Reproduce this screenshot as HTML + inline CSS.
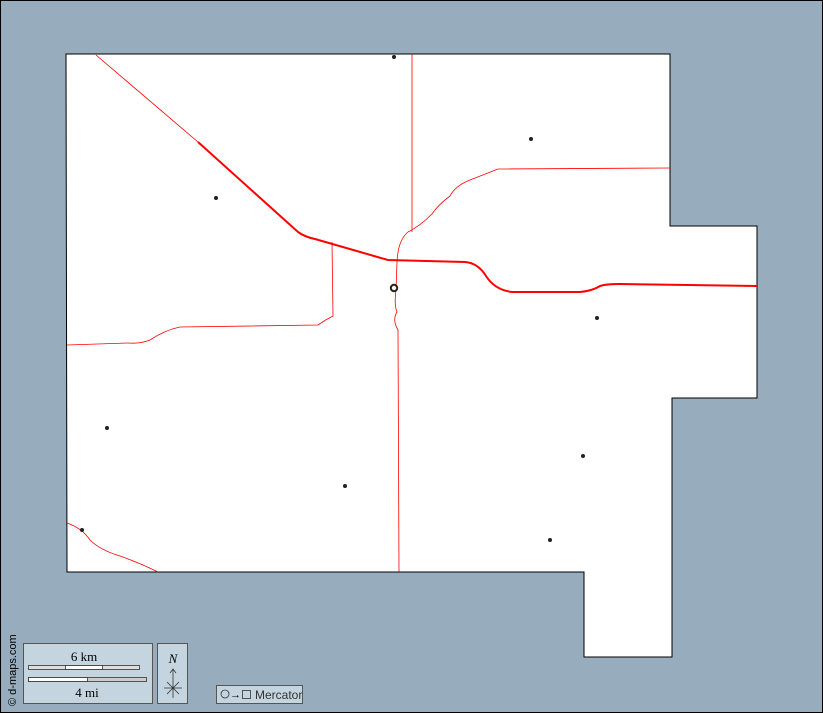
<!DOCTYPE html>
<html><head><style>body{margin:0}svg{display:block}</style></head><body>
<svg width="823" height="713" xmlns="http://www.w3.org/2000/svg">
<rect x="0.5" y="0.5" width="822" height="712" fill="#97adbd" stroke="#000"/>
<polygon points="66,54 670,54 670,226 757,226 757,398 672,398 672,657 584,657 584,572 67,572" fill="#fff" stroke="#000" stroke-width="1"/>
<g fill="none" stroke="#f00">
<path d="M96,55 L198,142" stroke-width="0.8"/>
<path d="M198,142 L298,232 Q305,237 315,239 L388,260 L465,262 Q478,263 486,276 Q495,290 512,292 L580,292 Q592,291 600,286 Q606,284 620,284 L757,286" stroke-width="2"/>
<path d="M412,54 L412,232" stroke-width="0.8"/>
<path d="M670,168 L498,169 L470,180 Q455,186 450,196 Q438,205 432,214 Q420,226 408,232 Q398,240 397,262 L396,290 Q394,305 397,312 Q392,320 398,330 L399,572" stroke-width="0.8"/>
<path d="M332,242 L333,316 Q325,320 318,325 L180,327 Q165,330 150,340 Q140,344 128,343 L67,345" stroke-width="0.8"/>
<path d="M67,523 Q82,528 90,540 Q100,550 120,556 Q140,563 158,572" stroke-width="0.8"/>
</g>
<g fill="#222">
<circle cx="394" cy="57" r="2"/><circle cx="531" cy="139" r="2"/><circle cx="216" cy="198" r="2"/>
<circle cx="597" cy="318" r="2"/><circle cx="107" cy="428" r="2"/><circle cx="583" cy="456" r="2"/>
<circle cx="345" cy="486" r="2"/><circle cx="82" cy="530" r="2"/><circle cx="550" cy="540" r="2"/>
</g>
<circle cx="394" cy="288" r="3.2" fill="#fff" stroke="#222" stroke-width="2"/>
<text transform="translate(16,706) rotate(-90)" font-family="Liberation Sans" font-size="11" fill="#000">© d-maps.com</text>
<rect x="23.5" y="643.5" width="129" height="60" fill="#c5d5e0" stroke="#555"/>
<text x="84" y="661" text-anchor="middle" font-family="Liberation Serif" font-size="13">6 km</text>
<rect x="28.5" y="665.5" width="111" height="4" fill="#ddd" stroke="#333" stroke-width="0.8"/>
<rect x="65.5" y="665.5" width="37" height="4" fill="#fff" stroke="#333" stroke-width="0.8"/>
<rect x="28.5" y="677.5" width="118" height="4" fill="#ccc" stroke="#333" stroke-width="0.8"/>
<rect x="28.5" y="677.5" width="59" height="4" fill="#fff" stroke="#333" stroke-width="0.8"/>
<text x="87" y="697" text-anchor="middle" font-family="Liberation Serif" font-size="13">4 mi</text>
<rect x="157.5" y="643.5" width="30" height="60" fill="#c5d5e0" stroke="#555"/>
<text x="173" y="663" text-anchor="middle" font-family="Liberation Serif" font-style="italic" font-size="13">N</text>
<g stroke="#333" stroke-width="0.8" fill="none"><path d="M173,669 L173,698 M170,673 L173,669 L176,673 M164,688 L182,688 M167,682 L179,694 M179,682 L167,694"/></g>
<rect x="216.5" y="685.5" width="86" height="18" fill="#c5d5e0" stroke="#555"/>
<circle cx="225" cy="694" r="4" fill="none" stroke="#333" stroke-width="0.8"/>
<text x="230" y="698" font-family="Liberation Sans" font-size="11">→</text>
<rect x="242.5" y="690.5" width="8" height="8" fill="none" stroke="#333" stroke-width="0.8"/>
<text x="255" y="699" font-family="Liberation Sans" font-size="12" fill="#333">Mercator</text>
</svg>
</body></html>
